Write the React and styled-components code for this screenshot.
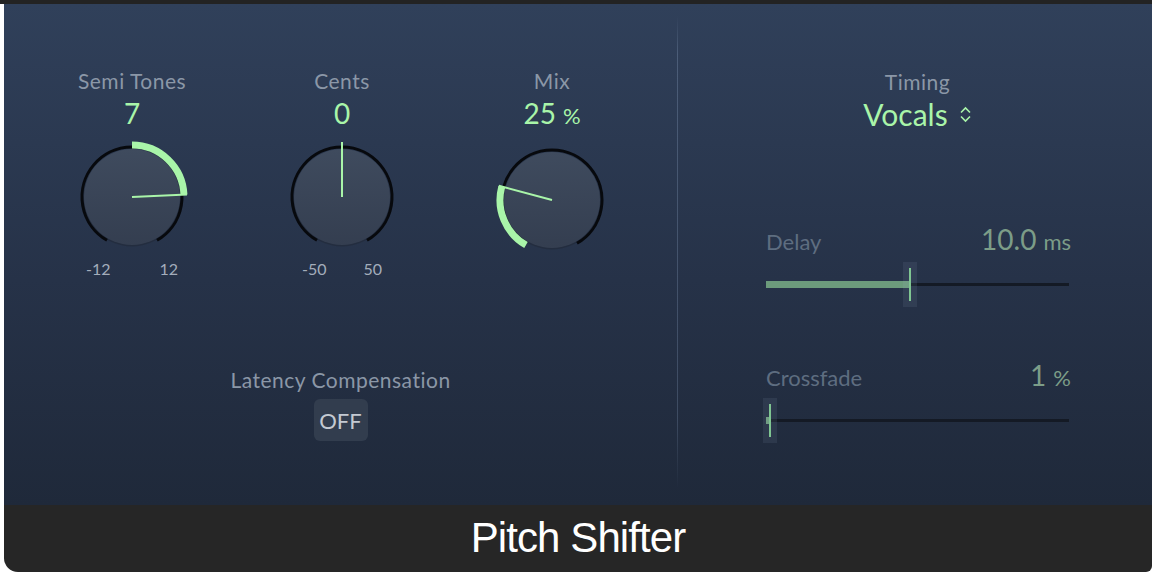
import React from 'react';
import styled, { createGlobalStyle } from 'styled-components';

const GlobalStyle = createGlobalStyle`
  html, body {
    margin: 0;
    padding: 0;
    background: #ffffff;
  }
  body {
    font-family: Lato, "Open Sans", sans-serif;
  }
`;

const GREEN = '#a9f5a9';
const DIM_GREEN = '#7c9d88';

const pt = (r, a) => {
  const rad = (a * Math.PI) / 180;
  return [60 + r * Math.sin(rad), 60 - r * Math.cos(rad)];
};

const arc = (r, a0, a1) => {
  const [x0, y0] = pt(r, a0);
  const [x1, y1] = pt(r, a1);
  const large = Math.abs(a1 - a0) > 180 ? 1 : 0;
  return `M${x0} ${y0} A${r} ${r} 0 ${large} 1 ${x1} ${y1}`;
};

const KnobDial = ({ origin, angle, id }) => {
  const from = Math.min(origin, angle);
  const to = Math.max(origin, angle);
  const [px, py] = pt(55, angle);
  return (
    <svg width="120" height="120" viewBox="0 0 120 120">
      <defs>
        <linearGradient id={`body-${id}`} x1="0" y1="0" x2="0" y2="1">
          <stop offset="0" stopColor="#3f4b5e" />
          <stop offset="1" stopColor="#343e50" />
        </linearGradient>
      </defs>
      <circle cx="60" cy="61" r="48.5" fill="#222a38" opacity="0.6" />
      <circle cx="60" cy="60" r="48" fill={`url(#body-${id})`} />
      <path d={arc(50, -150, 150)} stroke="#07090d" strokeWidth="3" fill="none" />
      {to > from && (
        <path d={arc(52, from, to)} stroke={GREEN} strokeWidth="7" fill="none" />
      )}
      <line x1="60" y1="60" x2={px} y2={py} stroke={GREEN} strokeWidth="2" />
    </svg>
  );
};

const Chevrons = () => (
  <svg width="13" height="17" viewBox="0 0 13 17">
    <path d="M2 6.5 L6.5 2 L11 6.5" stroke={GREEN} strokeWidth="1.6" fill="none" />
    <path d="M2 10.5 L6.5 15 L11 10.5" stroke={GREEN} strokeWidth="1.6" fill="none" />
  </svg>
);

const Knob = ({ id, label, value, unit, origin, angle, scale, spread }) => (
  <KnobColumn>
    <Label>{label}</Label>
    <KnobValue>
      {value}
      {unit && <Unit>{unit}</Unit>}
    </KnobValue>
    <KnobDial id={id} origin={origin} angle={angle} />
    <ScaleRow $width={spread}>
      {scale ? (
        <>
          <span>{scale[0]}</span>
          <span>{scale[1]}</span>
        </>
      ) : (
        <span>&nbsp;</span>
      )}
    </ScaleRow>
  </KnobColumn>
);

const Slider = ({ label, value, unit, pct }) => (
  <SliderBlock>
    <SliderHeader>
      <SliderLabel>{label}</SliderLabel>
      <SliderValue>
        {value}
        <SliderUnit>{unit}</SliderUnit>
      </SliderValue>
    </SliderHeader>
    <SliderArea>
      <Track />
      <Fill style={{ width: `${pct}%` }} />
      <Handle style={{ left: `calc(${pct}% - 7px)` }} />
    </SliderArea>
  </SliderBlock>
);

const App = () => (
  <>
    <GlobalStyle />
    <Frame>
      <Panel>
        <LeftSection>
          <KnobRow>
            <Knob
              id="semi"
              label="Semi Tones"
              value="7"
              origin={0}
              angle={87.5}
              scale={['-12', '12']}
              spread={92}
            />
            <Knob
              id="cents"
              label="Cents"
              value="0"
              origin={0}
              angle={0}
              scale={['-50', '50']}
              spread={80}
            />
            <Knob
              id="mix"
              label="Mix"
              value="25"
              unit="%"
              origin={-150}
              angle={-75}
            />
          </KnobRow>
          <Latency>
            <Label>Latency Compensation</Label>
            <ToggleButton>OFF</ToggleButton>
          </Latency>
        </LeftSection>
        <Divider />
        <RightSection>
          <Timing>
            <Label>Timing</Label>
            <Dropdown>
              Vocals
              <Chevrons />
            </Dropdown>
          </Timing>
          <Sliders>
            <Slider label="Delay" value="10.0" unit="ms" pct={47.5} />
            <Slider label="Crossfade" value="1" unit="%" pct={1.3} />
          </Sliders>
        </RightSection>
      </Panel>
      <TitleBar>Pitch Shifter</TitleBar>
    </Frame>
  </>
);

export default App;

const Frame = styled.div`
  width: 1152px;
  height: 572px;
  display: flex;
  flex-direction: column;
  border-top: 4px solid #232323;
  box-sizing: border-box;
`;

const Panel = styled.div`
  margin-left: 4px;
  height: 501px;
  display: flex;
  background: linear-gradient(180deg, #30405a 0%, #263248 55%, #1f293a 100%);
`;

const LeftSection = styled.div`
  width: 673px;
  display: flex;
  flex-direction: column;
  align-items: center;
  padding-top: 65px;
  box-sizing: border-box;
`;

const KnobRow = styled.div`
  display: grid;
  grid-template-columns: repeat(3, 210px);
  margin-left: 3px;
`;

const KnobColumn = styled.div`
  display: flex;
  flex-direction: column;
  align-items: center;
`;

const Label = styled.div`
  font-size: 21px;
  line-height: 24px;
  color: #8b97a7;
  letter-spacing: 0.5px;
  white-space: nowrap;
`;

const KnobValue = styled.div`
  margin-top: 4px;
  font-size: 28px;
  line-height: 32px;
  color: ${GREEN};
  margin-bottom: 8px;
`;

const Unit = styled.span`
  font-size: 22px;
  margin-left: 7px;
`;

const ScaleRow = styled.div`
  width: ${(p) => p.$width || 80}px;
  margin-top: 3px;
  display: flex;
  justify-content: space-between;
  font-size: 16px;
  line-height: 18px;
  color: #a3adbb;
`;

const Latency = styled.div`
  margin-top: 87px;
  display: flex;
  flex-direction: column;
  align-items: center;
  gap: 7px;
`;

const ToggleButton = styled.button`
  width: 54px;
  height: 42px;
  border: none;
  border-radius: 6px;
  background: #323d4e;
  color: #c4cad2;
  font-family: Lato, sans-serif;
  font-size: 22px;
  padding: 0;
  cursor: pointer;
`;

const Divider = styled.div`
  width: 1px;
  margin: 12px 0 16px;
  background: linear-gradient(
    180deg,
    rgba(120, 140, 170, 0) 0%,
    rgba(120, 140, 170, 0.4) 8%,
    rgba(120, 140, 170, 0.32) 85%,
    rgba(120, 140, 170, 0) 100%
  );
`;

const RightSection = styled.div`
  flex: 1;
  display: flex;
  flex-direction: column;
  padding: 66px 83px 0 88px;
  box-sizing: border-box;
`;

const Timing = styled.div`
  display: flex;
  flex-direction: column;
  align-items: center;
  gap: 3px;
`;

const Dropdown = styled.div`
  display: flex;
  align-items: center;
  gap: 11px;
  font-size: 30px;
  line-height: 34px;
  color: ${GREEN};
  cursor: pointer;
`;

const Sliders = styled.div`
  margin-top: 95px;
  display: flex;
  flex-direction: column;
  gap: 55px;
`;

const SliderBlock = styled.div`
  display: flex;
  flex-direction: column;
  gap: 10px;
`;

const SliderHeader = styled.div`
  display: flex;
  justify-content: space-between;
  align-items: baseline;
  height: 26px;
  margin-right: -2px;
`;

const SliderLabel = styled.span`
  font-size: 22px;
  line-height: 26px;
  color: #5e6d80;
`;

const SliderValue = styled.span`
  font-size: 28px;
  line-height: 26px;
  color: ${DIM_GREEN};
`;

const SliderUnit = styled.span`
  font-size: 22px;
  margin-left: 7px;
`;

const SliderArea = styled.div`
  position: relative;
  height: 45px;
  display: flex;
  align-items: center;
`;

const Track = styled.div`
  width: 100%;
  height: 3px;
  background: #141a25;
`;

const Fill = styled.div`
  position: absolute;
  left: 0;
  top: 19px;
  height: 7px;
  background: #6c9b7c;
`;

const Handle = styled.div`
  position: absolute;
  top: 0;
  width: 14px;
  height: 45px;
  background: rgba(160, 180, 210, 0.1);

  &::after {
    content: '';
    position: absolute;
    left: 6.5px;
    top: 6px;
    bottom: 6px;
    width: 1.2px;
    background: #7fc592;
  }
`;

const TitleBar = styled.div`
  margin-left: 4px;
  flex: 1;
  display: flex;
  align-items: center;
  justify-content: center;
  background: #262626;
  border-radius: 0 0 6px 14px;
  color: #ffffff;
  font-family: "Liberation Sans", Arial, sans-serif;
  font-size: 42px;
  letter-spacing: -0.9px;
  padding-bottom: 2px;
`;
